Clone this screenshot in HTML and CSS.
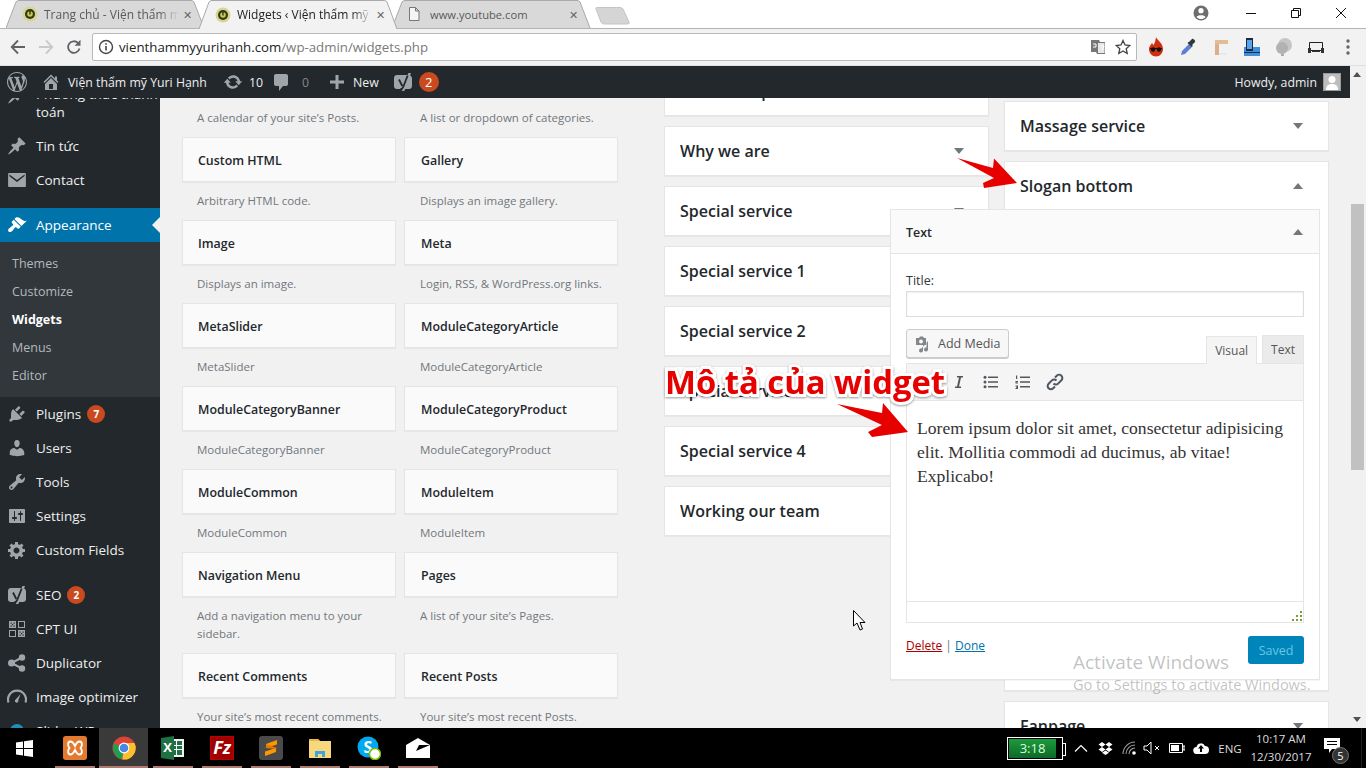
FILE: index.html
```html
<!DOCTYPE html>
<html lang="en">
<head>
    <meta charset="UTF-8">
    <meta name="viewport" content="width=device-width, initial-scale=1.0">
    <title>Widgets</title>
    <link rel="stylesheet" href="styles.css">
</head>
<body>

<svg class="sprite" width="0" height="0">
    <symbol id="i-pin" viewBox="0 0 20 20"><path d="M10.44 3.02l1.82-1.82 6.36 6.35-1.83 1.82c-1.05-.68-2.48-.57-3.41.36l-.75.75c-.92.93-1.04 2.35-.35 3.41l-1.83 1.82-2.41-2.41-2.8 2.79c-.42.42-3.38 2.71-3.8 2.29s1.86-3.39 2.28-3.81l2.79-2.79L4.1 9.36l1.83-1.82c1.05.69 2.48.57 3.4-.36l.75-.75c.93-.92 1.05-2.35.36-3.41z"/></symbol>
    <symbol id="i-mail" viewBox="0 0 20 20"><path d="M2 3h16c.6 0 .9.4.9 1v12c0 .6-.4 1-.9 1H2c-.6 0-.9-.4-.9-1V4c0-.6.4-1 .9-1zm15.6 3V4.6L10 10 2.4 4.6V6.200L10 12z"/></symbol>
    <symbol id="i-brush" viewBox="0 0 20 20"><path d="M14.48 11.06L7.41 3.99l1.5-1.5c.5-.56 2.3-.47 3.51.32 1.21.8 1.43 1.28 2.91 2.1 1.18.64 2.45 1.26 4.45.85zm-.71.71L6.7 4.7 4.93 6.47c-.39.39-.39 1.02 0 1.41l1.06 1.06c.39.39.39 1.03 0 1.42-.6.6-1.43 1.11-2.21 1.69-.35.26-.7.53-1.01.84C1.43 13.23.5 15.200 1.5 16.500c1 1.200 2.800.4 4-.8.300-.3.580-.660.840-1.010.580-.780 1.090-1.610 1.690-2.210.390-.390 1.030-.390 1.420 0l1.060 1.060c.390.390 1.020.390 1.410 0z"/></symbol>
    <symbol id="i-plug" viewBox="0 0 20 20"><path d="M13.11 4.360L9.870 7.600 8 5.730l3.240-3.240c.35-.34 1.050-.2 1.560.32.520.51.660 1.210.310 1.550zm-8 1.770l.91-1.120 9.010 9.010-1.190.840c-.71.710-2.630 1.160-3.820 1.160H6.140L4.900 17.260c-.59.590-1.540.590-2.120 0-.59-.58-.59-1.530 0-2.120l1.240-1.240v-3.880c0-1.130.400-3.190 1.090-3.890zm7.260 3.970l3.240-3.240c.34-.35 1.040-.21 1.550.31.520.51.660 1.210.310 1.550l-3.240 3.250z"/></symbol>
    <symbol id="i-user" viewBox="0 0 20 20"><path d="M10 9.250c-2.270 0-2.730-3.440-2.730-3.440C7 4.020 7.820 2 9.970 2c2.160 0 2.980 2.020 2.710 3.810 0 0-.41 3.440-2.68 3.440zm0 2.570L12.720 10c2.390 0 4.520 2.330 4.520 4.530v2.490s-3.650 1.130-7.240 1.130c-3.650 0-7.240-1.130-7.240-1.130v-2.490c0-2.250 1.940-4.480 4.470-4.480z"/></symbol>
    <symbol id="i-wrench" viewBox="0 0 20 20"><path d="M16.680 9.770c-1.340 1.340-3.300 1.670-4.950.99l-5.410 6.520c-.99.990-2.590.99-3.580 0s-.99-2.590 0-3.570l6.520-5.420c-.68-1.650-.35-3.610.99-4.950 1.280-1.280 3.120-1.620 4.720-1.060l-2.890 2.890 2.820 2.820 2.860-2.870c.530 1.580.180 3.390-1.080 4.650zM3.810 16.210c.4.390 1.040.39 1.430 0 .4-.4.4-1.040 0-1.430-.39-.4-1.030-.4-1.430 0-.39.39-.39 1.030 0 1.430z"/></symbol>
    <symbol id="i-sliders" viewBox="0 0 20 20"><path d="M18 16V4c0-.55-.45-1-1-1H3c-.55 0-1 .45-1 1v12c0 .55.45 1 1 1h14c.55 0 1-.45 1-1zM8 11h1c.55 0 1 .45 1 1s-.45 1-1 1H8v1.500c0 .28-.22.5-.5.5s-.5-.22-.5-.5V13H6c-.55 0-1-.45-1-1s.45-1 1-1h1V5.500c0-.28.22-.5.5-.5s.5.22.5.5V11zm5-2h-1c-.55 0-1-.45-1-1s.45-1 1-1h1V5.500c0-.28.22-.5.5-.5s.5.22.5.5V7h1c.55 0 1 .45 1 1s-.45 1-1 1h-1v5.500c0 .28-.22.5-.5.5s-.5-.22-.5-.5V9z"/></symbol>
    <symbol id="i-gear" viewBox="0 0 20 20"><path d="M18 12h-2.180c-.17.700-.44 1.350-.81 1.930l1.540 1.540-2.100 2.100-1.540-1.540c-.58.360-1.230.630-1.910.790V19H8v-2.180c-.68-.16-1.330-.43-1.910-.79l-1.540 1.540-2.120-2.120 1.540-1.540c-.36-.58-.63-1.230-.79-1.910H1V9.030h2.170c.16-.7.440-1.350.8-1.940L2.430 5.550l2.100-2.100 1.540 1.540c.58-.37 1.240-.64 1.930-.81V2h3v2.180c.68.160 1.330.430 1.910.790l1.540-1.540 2.120 2.120-1.540 1.540c.36.590.640 1.240.8 1.940H18V12zm-8.500 1.500c1.660 0 3-1.340 3-3s-1.340-3-3-3-3 1.340-3 3 1.340 3 3 3z"/></symbol>
    <symbol id="i-yoast" viewBox="0 0 20 20"><path d="M4 3h10.500l1-2h2.500l-.9 2.200C18.300 4 19 5 19 6.500V14c0 2-1.300 3-3 3h-3.800l-.9 2H8.700l.9-2H4c-2 0-3-1.300-3-3V6c0-2 1.300-3 3-3z"/><path d="M6 7.500l3.300 6.500M14.700 3.500L10 15.500c-.4 1-1.400 1.700-2.700 1.700" fill="none" stroke="#23282d" stroke-width="1.800"/></symbol>
    <symbol id="i-cpt" viewBox="0 0 20 20"><path d="M2 2h7v7H2zM2 11h7v7H2zM11 2h7v7h-7zM11 11h7v7h-7z"/><path d="M12 3h5v5h-5zM3 12h5v5H3z" fill="#23282d"/><path d="M3.500 3.500h1.200v1.200H3.500zM6.500 3.500h1.200v1.200H6.500zM5 5h1.200v1.200H5zM3.500 6.500h1.200v1.200H3.500zM6.500 6.500h1.200v1.200H6.500zM12.500 12.500h1.200v1.200h-1.200zM15.500 12.500h1.200v1.200h-1.200zM14 14h1.200v1.200H14zM12.500 15.500h1.200v1.200h-1.200zM15.500 15.500h1.200v1.200h-1.200z" fill="#23282d"/></symbol>
    <symbol id="i-share" viewBox="0 0 20 20"><circle cx="4.500" cy="10" r="3.500"/><circle cx="15" cy="4.500" r="3.200"/><circle cx="15" cy="15.500" r="3.200"/><path d="M4.500 10L15 4.500M4.500 10L15 15.500" fill="none" stroke="#a0a5aa" stroke-width="2"/></symbol>
    <symbol id="i-gauge" viewBox="0 0 20 20"><path d="M1.500 15.500a9 9 0 1 1 17 0" fill="none" stroke="#a0a5aa" stroke-width="2.200"/><path d="M13.600 7l-2.300 6.200a1.800 1.800 0 1 1-2.400-1z"/></symbol>
    <symbol id="i-wp" viewBox="0 0 20 20"><path d="M20 10c0-5.510-4.490-10-10-10C4.480 0 0 4.490 0 10c0 5.520 4.480 10 10 10 5.510 0 10-4.480 10-10zM7.780 15.370L4.370 6.220c.55-.02 1.170-.08 1.170-.08.5-.06.44-1.130-.06-1.110 0 0-1.450.11-2.370.11-.18 0-.37 0-.58-.01C4.120 2.690 6.870 1.110 10 1.110c2.330 0 4.450.870 6.050 2.340-.68-.11-1.650.390-1.650 1.580 0 .740.450 1.360.9 2.100.350.610.550 1.360.550 2.460 0 1.490-1.400 5-1.400 5l-3.030-8.370c.540-.02.820-.17.820-.17.5-.05.440-1.250-.06-1.220 0 0-1.440.120-2.380.120-.870 0-2.330-.12-2.330-.12-.5-.03-.56 1.200-.06 1.220l.920.080 1.260 3.410zM17.410 10c.240-.64.740-1.870.430-4.250.7 1.290 1.050 2.710 1.050 4.250 0 3.290-1.730 6.240-4.400 7.780.970-2.590 1.940-5.200 2.920-7.780zM6.100 18.090C3.120 16.650 1.110 13.530 1.110 10c0-1.300.230-2.480.72-3.590C3.250 10.300 4.670 14.200 6.100 18.090zm4.030-6.630l2.580 6.980c-.86.290-1.760.450-2.710.450-.79 0-1.570-.11-2.290-.33.810-2.380 1.620-4.740 2.420-7.100z"/></symbol>
    <symbol id="i-home" viewBox="0 0 20 20"><path d="M16 8.500l1.530 1.530-1.060 1.060L10 4.620l-6.470 6.470-1.060-1.060L10 2.500l4 4v-2h2v4zm-6-2.460l6 5.990V18H4v-5.970zM12 17v-5H8v5h4z"/></symbol>
    <symbol id="i-update" viewBox="0 0 20 20"><path d="M10.200 3.280c3.530 0 6.430 2.610 6.920 6h2.080l-3.500 4-3.500-4h2.320c-.45-1.970-2.210-3.450-4.320-3.450-1.450 0-2.730.710-3.540 1.780L4.950 5.660C6.230 4.200 8.110 3.280 10.200 3.280zm-.4 13.440c-3.520 0-6.430-2.610-6.920-6H.8l3.500-4c1.170 1.330 2.330 2.670 3.500 4H5.480c.450 1.970 2.210 3.450 4.320 3.450 1.450 0 2.730-.71 3.540-1.780l1.710 1.950c-1.280 1.460-3.150 2.380-5.250 2.380z"/></symbol>
    <symbol id="i-comment" viewBox="0 0 20 20"><path d="M5 2h10c1.100 0 2 .9 2 2v8c0 1.100-.9 2-2 2h-3l-4 5v-5H5c-1.100 0-2-.9-2-2V4c0-1.100.9-2 2-2z"/></symbol>
    <symbol id="i-plus" viewBox="0 0 20 20"><path d="M17 8.500v3h-5.500V17h-3v-5.500H3v-3h5.500V3h3v5.500z"/></symbol>
    <symbol id="i-fav" viewBox="0 0 16 16"><circle cx="8" cy="8" r="7.500" fill="#d8d68a"/><circle cx="8" cy="8" r="5" fill="#2f3a1c"/><circle cx="8" cy="8" r="2.800" fill="#c7c95a"/><path d="M7.300 5h1.400v3.500H7.300z" fill="#2f3a1c"/></symbol>
</svg>

<!-- browser tabs -->
<div class="tabstrip">
    <div class="tab">
        <svg class="tab-shape" width="199" height="28"><path d="M0 28L10 2Q11 .5 13 .5H185Q187 .5 188 2L198 28" fill="#d9d9d9" stroke="#a9a9a9"/></svg>
        <svg class="favicon" width="16" height="16"><use href="#i-fav"/></svg>
        <span class="tab-title">Trang chủ - Viện thẩm mỹ Yuri</span>
        <span class="tab-close">✕</span>
    </div>
    <div class="tab tab-active">
        <svg class="tab-shape" width="199" height="29"><path d="M0 29L10 2Q11 .5 13 .5H185Q187 .5 188 2L198 29" fill="#f2f2f2" stroke="#a9a9a9"/></svg>
        <svg class="favicon" width="16" height="16"><use href="#i-fav"/></svg>
        <span class="tab-title">Widgets ‹ Viện thẩm mỹ Yuri</span>
        <span class="tab-close">✕</span>
    </div>
    <div class="tab tab-page">
        <svg class="tab-shape" width="199" height="28"><path d="M0 28L10 2Q11 .5 13 .5H185Q187 .5 188 2L198 28" fill="#d9d9d9" stroke="#a9a9a9"/></svg>
        <svg class="favicon" width="16" height="16" viewBox="0 0 16 16"><path d="M3.500 1.500h6l3.500 3.500v9.500h-9.500zM9.500 1.500V5H13" fill="#f5f5f5" stroke="#777"/></svg>
        <span class="tab-title">www.youtube.com</span>
        <span class="tab-close">✕</span>
    </div>
    <svg class="newtab" width="36" height="20" viewBox="0 0 36 20"><path d="M2 1.500H25Q27 1.500 28 3L34 16Q35 18 32 18H9Q7 18 6 16L1 3Q.5 1.500 2 1.500z" fill="#d5d5d5" stroke="#c4c4c4"/></svg>
    <div class="winctl">
        <svg width="18" height="18" viewBox="0 0 18 18"><circle cx="9" cy="9" r="7.500" fill="#6e6e6e"/><circle cx="9" cy="6.700" r="2.600" fill="#fff"/><path d="M4.500 13c1-2.300 8-2.300 9 0-1.200 1.500-2.800 2-4.500 2s-3.300-.5-4.500-2z" fill="#fff"/></svg>
        <svg class="winbtn" width="12" height="12" viewBox="0 0 12 12"><path d="M1 6.500h10" stroke="#111"/></svg>
        <svg class="winbtn" width="12" height="12" viewBox="0 0 12 12"><path d="M1.500 3.500h7v7h-7zM3.500 3.500v-2h7v7h-2" fill="none" stroke="#111"/></svg>
        <svg class="winbtn" width="12" height="12" viewBox="0 0 12 12"><path d="M1 1l10 10M11 1L1 11" stroke="#111"/></svg>
    </div>
</div>

<!-- browser toolbar -->
<div class="toolbar">
    <svg class="navicon" width="16" height="16" viewBox="0 0 16 16"><path d="M15 8H2M8 1.500L1.700 8 8 14.500" fill="none" stroke="#5f6368" stroke-width="1.800"/></svg>
    <svg class="navicon" width="16" height="16" viewBox="0 0 16 16"><path d="M1 8h13M8 1.500L14.300 8 8 14.500" fill="none" stroke="#c9c9c9" stroke-width="1.800"/></svg>
    <svg class="navicon" width="16" height="16" viewBox="0 0 16 16"><path d="M13.500 9.500A5.800 5.800 0 1 1 12 4" fill="none" stroke="#5f6368" stroke-width="1.800"/><path d="M14.500.8v6h-6z" fill="#5f6368"/></svg>
    <div class="omnibox">
        <svg width="16" height="16" viewBox="0 0 16 16"><circle cx="8" cy="8" r="6.500" fill="none" stroke="#444" stroke-width="1.400"/><path d="M7.200 7h1.600v4.500H7.200zM7.200 4.200h1.600v1.600H7.200z" fill="#444"/></svg>
        <span class="url">vienthammyyurihanh.com<span class="url-path">/wp-admin/widgets.php</span></span>
        <svg class="omni-translate" width="16" height="16" viewBox="0 0 16 16"><path d="M1 1h8l1 2h5v12H7l-1-2H1z" fill="#777"/><path d="M8 4h6.500v10H8z" fill="#e8e8e8"/><path d="M3 5h3v3H3M11 7h3M12 11l2-4" fill="none" stroke="#fff"/></svg>
        <svg width="16" height="16" viewBox="0 0 16 16"><path d="M8 1.500l2 4.500 4.800.5-3.600 3.200 1 4.800L8 12l-4.200 2.500 1-4.800L1.200 6.500 6 6z" fill="#fff" stroke="#444" stroke-width="1.300"/></svg>
    </div>
    <div class="extensions">
        <svg width="18" height="20" viewBox="0 0 18 20"><path d="M9 0c1 3 7 6 7 12 0 4-3 7.500-7 7.500S2 16 2 12c0-3 2-4 3-6 1 1 1 2 1.500 2C8 6 8.500 3 9 0z" fill="#d0300f"/><circle cx="6" cy="12.500" r="2.200" fill="#111"/><circle cx="12" cy="12.500" r="2.200" fill="#111"/><path d="M3 11h12v1H3z" fill="#111"/></svg>
        <svg width="18" height="20" viewBox="0 0 18 20"><path d="M2 18l1-4 7-7 3 3-7 7z" fill="#5a7fd6"/><path d="M10 5l3-3c1-1 4 2 3 3l-3 3 1 1-1.500 1-4-4 1-1z" fill="#33373c"/></svg>
        <svg width="18" height="20" viewBox="0 0 18 20"><path d="M4 6h4v12H4z" fill="#d9b08a"/><path d="M4 3h13v4H4z" fill="#e3bb94"/><path d="M8 16h8v1.500H8z" fill="#e5e5e5"/></svg>
        <svg width="18" height="20" viewBox="0 0 18 20"><path d="M1 10h16v9H1z" fill="#3f8fe0"/><path d="M3 1h7v13H3z" fill="#1b2a3d"/><path d="M4 3h5v9H4z" fill="#5aa2ea"/><path d="M1 15h16v1H1z" fill="#1b2a3d"/></svg>
        <svg width="18" height="20" viewBox="0 0 18 20"><circle cx="10" cy="8" r="7" fill="#c6c6c6"/><circle cx="7" cy="11" r="6" fill="#b2b2b2"/><path d="M6 17h3v2H6z" fill="#aaa"/></svg>
        <svg width="18" height="20" viewBox="0 0 18 20"><path d="M2.500 5.500h13v8h-13z" fill="none" stroke="#222"/><path d="M1 11h3v5H1zM14 11h3v5h-3zM5 14h8v1H5z" fill="#333"/></svg>
        <svg class="dots" width="4" height="16" viewBox="0 0 4 16"><circle cx="2" cy="2" r="1.700" fill="#666"/><circle cx="2" cy="8" r="1.700" fill="#666"/><circle cx="2" cy="14" r="1.700" fill="#666"/></svg>
    </div>
</div>

<!-- wp admin bar -->
<div class="page">
    <div class="page-main">
        <div class="adminbar">
            <svg class="ab-wp" width="20" height="20"><use href="#i-wp"/></svg>
            <svg class="ab-home" width="20" height="20"><use href="#i-home"/></svg>
            <span class="ab-text">Viện thẩm mỹ Yuri Hạnh</span>
            <svg class="ab-update" width="20" height="20"><use href="#i-update"/></svg>
            <span class="ab-text">10</span>
            <svg class="ab-comment" width="20" height="20"><use href="#i-comment"/></svg>
            <span class="ab-text ab-dim">0</span>
            <svg class="ab-plus" width="20" height="20"><use href="#i-plus"/></svg>
            <span class="ab-text">New</span>
            <svg class="ab-yoast" width="20" height="20"><use href="#i-yoast"/></svg>
            <span class="ab-badge">2</span>
            <span class="ab-text ab-howdy">Howdy, admin</span>
            <span class="ab-avatar"><svg width="16" height="16" viewBox="0 0 16 16"><circle cx="8" cy="5.500" r="3.500" fill="#fff"/><path d="M2 16c0-4 2-6 6-6s6 2 6 6z" fill="#fff"/></svg></span>
        </div>

        <div class="wp-body">
            <!-- left menu -->
            <div class="sidebar">
                <div class="menu-item menu-two-line">
                    <svg width="20" height="20"><use href="#i-pin"/></svg>
                    <span>Phương thức thanh toán</span>
                </div>
                <div class="menu-item"><svg width="20" height="20"><use href="#i-pin"/></svg><span>Tin tức</span></div>
                <div class="menu-item"><svg width="20" height="20"><use href="#i-mail"/></svg><span>Contact</span></div>
                <div class="menu-sep"></div>
                <div class="menu-item menu-current"><svg width="20" height="20"><use href="#i-brush"/></svg><span>Appearance</span></div>
                <div class="submenu">
                    <div>Themes</div>
                    <div>Customize</div>
                    <div class="sub-current">Widgets</div>
                    <div>Menus</div>
                    <div>Editor</div>
                </div>
                <div class="menu-item"><svg width="20" height="20"><use href="#i-plug"/></svg><span>Plugins</span><b class="menu-badge">7</b></div>
                <div class="menu-item"><svg width="20" height="20"><use href="#i-user"/></svg><span>Users</span></div>
                <div class="menu-item"><svg width="20" height="20"><use href="#i-wrench"/></svg><span>Tools</span></div>
                <div class="menu-item"><svg width="20" height="20"><use href="#i-sliders"/></svg><span>Settings</span></div>
                <div class="menu-item"><svg width="20" height="20"><use href="#i-gear"/></svg><span>Custom Fields</span></div>
                <div class="menu-sep"></div>
                <div class="menu-item"><svg width="20" height="20"><use href="#i-yoast"/></svg><span>SEO</span><b class="menu-badge">2</b></div>
                <div class="menu-item"><svg width="20" height="20"><use href="#i-cpt"/></svg><span>CPT UI</span></div>
                <div class="menu-item"><svg width="20" height="20"><use href="#i-share"/></svg><span>Duplicator</span></div>
                <div class="menu-item"><svg width="20" height="20"><use href="#i-gauge"/></svg><span>Image optimizer</span></div>
                <div class="menu-item"><svg width="20" height="20" viewBox="0 0 20 20"><circle cx="10" cy="10" r="7" fill="#1f8fb5"/></svg><span>Slider WP</span></div>
            </div>

            <div class="content">
                <!-- available widgets -->
                <div class="available">
                    <div class="avail-cell avail-top"><p>A calendar of your site’s Posts.</p></div>
                    <div class="avail-cell avail-top"><p>A list or dropdown of categories.</p></div>
                    <div class="avail-cell"><div class="widget-title">Custom HTML</div><p>Arbitrary HTML code.</p></div>
                    <div class="avail-cell"><div class="widget-title">Gallery</div><p>Displays an image gallery.</p></div>
                    <div class="avail-cell"><div class="widget-title">Image</div><p>Displays an image.</p></div>
                    <div class="avail-cell"><div class="widget-title">Meta</div><p>Login, RSS, &amp; WordPress.org links.</p></div>
                    <div class="avail-cell"><div class="widget-title">MetaSlider</div><p>MetaSlider</p></div>
                    <div class="avail-cell"><div class="widget-title">ModuleCategoryArticle</div><p>ModuleCategoryArticle</p></div>
                    <div class="avail-cell"><div class="widget-title">ModuleCategoryBanner</div><p>ModuleCategoryBanner</p></div>
                    <div class="avail-cell"><div class="widget-title">ModuleCategoryProduct</div><p>ModuleCategoryProduct</p></div>
                    <div class="avail-cell"><div class="widget-title">ModuleCommon</div><p>ModuleCommon</p></div>
                    <div class="avail-cell"><div class="widget-title">ModuleItem</div><p>ModuleItem</p></div>
                    <div class="avail-cell"><div class="widget-title">Navigation Menu</div><p>Add a navigation menu to your sidebar.</p></div>
                    <div class="avail-cell"><div class="widget-title">Pages</div><p>A list of your site’s Pages.</p></div>
                    <div class="avail-cell"><div class="widget-title">Recent Comments</div><p>Your site’s most recent comments.</p></div>
                    <div class="avail-cell"><div class="widget-title">Recent Posts</div><p>Your site’s most recent Posts.</p></div>
                </div>

                <!-- middle sidebar column -->
                <div class="sidebar-col col-mid">
                    <div class="area"><h2>Product top</h2></div>
                    <div class="area"><h2>Why we are</h2><i class="caret"></i></div>
                    <div class="area"><h2>Special service</h2><i class="caret"></i></div>
                    <div class="area"><h2>Special service 1</h2><i class="caret"></i></div>
                    <div class="area"><h2>Special service 2</h2><i class="caret"></i></div>
                    <div class="area"><h2>Special service 3</h2><i class="caret"></i></div>
                    <div class="area"><h2>Special service 4</h2><i class="caret"></i></div>
                    <div class="area"><h2>Working our team</h2><i class="caret"></i></div>
                </div>

                <!-- right sidebar column -->
                <div class="sidebar-col col-right">
                    <div class="area"><h2>Massage service</h2><i class="caret"></i></div>
                    <div class="area area-open">
                        <h2>Slogan bottom</h2><i class="caret caret-up"></i>
                        <div class="widget-pop">
                            <div class="pop-head"><span>Text</span><i class="caret caret-up"></i></div>
                            <div class="pop-body">
                                <label class="pop-label">Title:</label>
                                <div class="pop-input"></div>
                                <div class="editor-tools">
                                    <div class="add-media">
                                        <svg width="18" height="18" viewBox="0 0 18 18"><path d="M2 3h3l1-1.500h3L10 3h2v7H2z" fill="#82878c"/><circle cx="7" cy="6.500" r="2" fill="#f7f7f7"/><path d="M14 6v8.500a2 2 0 1 1-1.500-1.900V8L9 9v6.500a2 2 0 1 1-1.500-1.900" fill="#82878c"/></svg>
                                        <span>Add Media</span>
                                    </div>
                                    <div class="editor-tabs">
                                        <span class="etab etab-on">Visual</span>
                                        <span class="etab">Text</span>
                                    </div>
                                </div>
                                <div class="editor">
                                    <div class="mce-bar">
                                        <svg width="20" height="20" viewBox="0 0 20 20"><path d="M8 4h6v1.500h-2L10 14.500h2V16H6v-1.500h2L10 5.500H8z" fill="#50575e"/></svg>
                                        <svg width="20" height="20" viewBox="0 0 20 20"><path d="M7 4.500h10v1.400H7zM7 9.300h10v1.400H7zM7 14.100h10v1.400H7z" fill="#50575e"/><circle cx="4" cy="5.200" r="1.500" fill="#50575e"/><circle cx="4" cy="10" r="1.500" fill="#50575e"/><circle cx="4" cy="14.800" r="1.500" fill="#50575e"/></svg>
                                        <svg width="20" height="20" viewBox="0 0 20 20"><path d="M7 4.500h10v1.400H7zM7 9.300h10v1.400H7zM7 14.100h10v1.400H7z" fill="#50575e"/><path d="M3 3.500h1.200v3.500H3zM2.500 9h2.500v1H3.600v.6H5v1H2.500zM2.500 13.500H5v3.500H2.500v-1h1.500v-.3H3v-.9h1v-.3H2.500z" fill="#50575e"/></svg>
                                        <svg width="20" height="20" viewBox="0 0 20 20"><path d="M8.500 11.500a3.200 3.200 0 0 0 4.600.1l3.300-3.300a3.200 3.200 0 0 0-4.600-4.600L10 5.500M11.500 8.500a3.200 3.200 0 0 0-4.600-.1l-3.300 3.300a3.200 3.200 0 0 0 4.600 4.600L10 14.500" fill="none" stroke="#50575e" stroke-width="2"/></svg>
                                    </div>
                                    <div class="mce-text">Lorem ipsum dolor sit amet, consectetur adipisicing elit. Mollitia commodi ad ducimus, ab vitae! Explicabo!</div>
                                    <div class="mce-status"><svg width="10" height="10" viewBox="0 0 10 10"><path d="M8 0h2v2H8zM8 4h2v2H8zM8 8h2v2H8zM4 4h2v2H4zM4 8h2v2H4zM0 8h2v2H0z" fill="#7d9a3c"/></svg></div>
                                </div>
                                <div class="pop-foot">
                                    <div class="pop-links"><a class="link-del">Delete</a> | <a class="link-done">Done</a></div>
                                    <span class="btn-saved">Saved</span>
                                </div>
                            </div>
                        </div>
                    </div>
                    <div class="area"><h2>Fanpage</h2><i class="caret"></i></div>
                </div>
            </div>
        </div>
    </div>
    <!-- page scrollbar -->
    <div class="scrollbar">
        <i class="sb-up"></i>
        <div class="sb-thumb"></div>
        <i class="sb-down"></i>
    </div>
</div>

<!-- windows taskbar -->
<div class="taskbar">
    <div class="start"><svg width="17" height="17" viewBox="0 0 17 17"><path d="M0 2.500l7-1v6.500H0zM8 1.300L17 0v8H8zM0 9h7v6.500l-7-1zM8 9h9v8l-9-1.300z" fill="#fff"/></svg></div>
    <div class="task"><svg width="24" height="24" viewBox="0 0 26 26"><rect width="26" height="26" rx="3" fill="#e27a2f"/><path d="M8 6c3 0 4 3 5 5 1-2 2-5 5-5 2 0 2.500 2 2.500 3.500S19 13 19 13s1.500 2 1.500 3.500S20 20 18 20c-3 0-4-3-5-5-1 2-2 5-5 5-2 0-2.500-2-2.500-3.500S7 13 7 13 5.500 11 5.500 9.500 6 6 8 6z" fill="none" stroke="#fff" stroke-width="2"/></svg></div>
    <div class="task task-on"><svg width="24" height="24" viewBox="0 0 24 24"><circle cx="12" cy="12" r="11.500" fill="#db4437"/><path d="M12 12L2 7.500A11.500 11.500 0 0 0 10 23.300z" fill="#1e9e52"/><path d="M12 12l-1.700 11.400A11.500 11.500 0 0 0 22.500 7H12z" fill="#fbc02d"/><circle cx="12" cy="12" r="5.400" fill="#fff"/><circle cx="12" cy="12" r="4.300" fill="#4a86e8"/></svg></div>
    <div class="task"><svg width="24" height="24" viewBox="0 0 24 24"><path d="M9 3h14v18H9z" fill="#fff" opacity=".95"/><path d="M11 5h10v14H11z" fill="#1e7145"/><path d="M15 5h1v14h-1zM11 9h10v1H11zM11 13h10v1H11z" fill="#fff"/><path d="M0 2l13-2v24L0 22z" fill="#1e7145"/><text x="6.500" y="16" class="tb-x">X</text></svg></div>
    <div class="task"><svg width="24" height="24" viewBox="0 0 24 24"><rect width="24" height="24" fill="#bf0000"/><rect x="1" y="1" width="22" height="22" fill="#a00000"/><text x="12" y="18" class="tb-fz">Fz</text></svg></div>
    <div class="task"><svg width="24" height="24" viewBox="0 0 24 24"><rect width="24" height="24" rx="3" fill="#4a4a4a"/><path d="M18 4v4.500L7 12V8zM6 20v-4.500L17 12v4z" fill="#ff9800"/><path d="M7 8l11 4-1 1L7 12z" fill="#e07b00"/></svg></div>
    <div class="task"><svg width="24" height="24" viewBox="0 0 24 24"><path d="M1 3h9l2 2h11v17H1z" fill="#f9d77e"/><path d="M1 3h9l2 2H1z" fill="#e6b84a"/><path d="M7 21v-6h10v6h-3v-3h-4v3z" fill="#3aa5e0"/></svg></div>
    <div class="task"><svg width="24" height="24" viewBox="0 0 24 24"><circle cx="11" cy="11" r="10.500" fill="#00a9f0"/><text x="11" y="16.500" class="tb-s">S</text><circle cx="18" cy="18" r="5.500" fill="#fff" stroke="#7fba00" stroke-width="1.500"/></svg></div>
    <div class="task"><svg width="24" height="20" viewBox="0 0 24 20"><path d="M0 7L12 0l12 7v13H0z" fill="#fff"/><path d="M0 7h24L10 13l3-6z" fill="#000"/></svg></div>

    <div class="tray">
        <div class="battery-box">
            <div class="battery-fill">3:18</div>
        </div>
        <div class="tray-icon"><svg width="14" height="8" viewBox="0 0 14 8"><path d="M1 7.500l6-6 6 6" fill="none" stroke="#fff" stroke-width="1.200"/></svg></div>
        <div class="tray-icon"><svg width="15" height="13" viewBox="0 0 15 13"><path d="M4 0l3.500 2.500L4 5 .5 2.500zM11 0l3.500 2.500L11 5 7.500 2.500zM4 5l3.500 2.500L4 10 .5 7.500zM11 5l3.500 2.500L11 10 7.500 7.500zM4 10.800l3.500-2.300 3.500 2.300L7.500 13z" fill="#fff"/></svg></div>
        <div class="tray-icon"><svg width="14" height="14" viewBox="0 0 14 14"><path d="M1 13A12 12 0 0 1 13 1M4 13a9 9 0 0 1 9-9M7 13a6 6 0 0 1 6-6" fill="none" stroke="#999" stroke-width="1.100"/><circle cx="12" cy="12" r="1.800" fill="#fff"/></svg></div>
        <div class="tray-icon"><svg width="20" height="14" viewBox="0 0 20 14"><path d="M1 5h3l4-4v12L4 9H1z" fill="none" stroke="#fff"/><path d="M12 5l4 4M16 5l-4 4" stroke="#fff"/></svg></div>
        <div class="tray-icon"><svg width="16" height="10" viewBox="0 0 16 10"><path d="M.5.500h13v9H.5zM14 3h2v4h-2z" fill="none" stroke="#fff"/><path d="M2 2h8v6H2z" fill="#fff"/></svg></div>
        <div class="tray-icon"><svg width="16" height="12" viewBox="0 0 16 12"><path d="M4 12a3.500 3.500 0 0 1-.5-7 4.500 4.500 0 0 1 8.500-1 4 4 0 0 1 0 8z" fill="#fff"/><path d="M8 3l3 3.500H9V10H7V6.500H5z" fill="#000"/></svg></div>
        <div class="tray-lang">ENG</div>
        <div class="tray-clock"><div>10:17 AM</div><div>12/30/2017</div></div>
        <div class="tray-notif">
            <svg width="16" height="15" viewBox="0 0 16 15"><path d="M0 0h16v11H8l-3 4v-4H0z" fill="#fff"/><path d="M3 3h10v1H3zM3 6h10v1H3z" fill="#000"/></svg>
            <span class="notif-count">5</span>
        </div>
    </div>
</div>

<!-- annotations drawn over the screenshot -->
<div class="annot-text">Mô tả của widget</div>
<svg class="annot-arrows" width="1366" height="768">
    <g fill="#e60000">
        <path d="M957 158L993 168L994 158.500L1017 183L984 188L983 183L994 178z"/>
        <path d="M837 404L882 413L883 403L908 432L872 437L868 432L882 425z"/>
    </g>
    <path d="M853.500 610.500V626L857 623L860 630L862.500 629L860 622.500H865z" fill="#fff" stroke="#000"/>
</svg>
<div class="activate">
    <div class="activate-big">Activate Windows</div>
    <div class="activate-small">Go to Settings to activate Windows.</div>
</div>

</body>
</html>
```

FILE: styles.css
```css
* {
    box-sizing: border-box;
}

html, body {
    height: 100%;
}

body {
    margin: 0;
    width: 1366px;
    height: 768px;
    overflow: hidden;
    position: relative;
    display: flex;
    flex-direction: column;
    font-family: "Open Sans", "Noto Sans", sans-serif;
    font-size: 13px;
    background: #f1f1f1;
}

.sprite {
    position: absolute;
}

/* browser tabs */
.tabstrip {
    height: 28px;
    background: #fff;
    display: flex;
    padding-left: 6px;
    position: relative;
    z-index: 2;
    flex: none;
}

.tab {
    position: relative;
    width: 199px;
    margin-right: -6px;
    height: 28px;
    display: flex;
    align-items: center;
    padding: 0 10px 0 16px;
    font-size: 12px;
    color: #5a5a5a;
}

.tab-active {
    color: #222;
    z-index: 1;
    height: 29px;
}

.tab-shape {
    position: absolute;
    left: 0;
    top: 0;
}

.favicon {
    position: relative;
    flex: none;
    margin-right: 6px;
}

.tab-page {
    font-size: 11.200px;
}

.tab-page .favicon {
    margin-left: -2px;
    margin-right: 8px;
}

.tab-title {
    position: relative;
    flex: 1;
    white-space: nowrap;
    overflow: hidden;
    -webkit-mask-image: linear-gradient(to right, #000 85%, transparent);
    mask-image: linear-gradient(to right, #000 85%, transparent);
}

.tab-page .tab-title {
    -webkit-mask-image: none;
    mask-image: none;
}

.tab-close {
    position: relative;
    flex: none;
    width: 12px;
    margin-left: 4px;
    font-size: 11px;
    color: #666;
}

.newtab {
    margin: 6px 0 0 10px;
}

.winctl {
    margin-left: auto;
    display: flex;
    align-items: center;
    height: 26px;
}

.winctl svg:first-child {
    margin-right: 35px;
}

.winbtn {
    margin-right: 33px;
}

.winbtn:last-child {
    margin-right: 19px;
}

/* browser toolbar */
.toolbar {
    height: 38px;
    background: #f2f2f2;
    border-top: 1px solid #b4b4b4;
    border-bottom: 1px solid #e0e0e0;
    display: flex;
    align-items: center;
    padding: 0 10px;
    flex: none;
}

.navicon {
    margin-right: 12px;
}

.navicon:nth-child(3) {
    margin-right: 10px;
}

.omnibox {
    width: 1045px;
    height: 28px;
    background: #fff;
    border: 1px solid #b9b9b9;
    border-radius: 2px;
    display: flex;
    align-items: center;
    padding: 0 5px;
}

.url {
    margin-left: 5px;
    font-size: 13.250px;
    color: #222;
    flex: 1;
}

.url-path {
    color: #7a7a7a;
}

.omni-translate {
    margin-right: 9px;
}

.extensions {
    display: flex;
    align-items: center;
    gap: 14px;
    margin-left: 10px;
}

.dots {
    margin-left: 7px;
}

/* page below the toolbar */
.page {
    flex: 1;
    min-height: 0;
    display: flex;
}

.page-main {
    width: 1350px;
    display: flex;
    flex-direction: column;
    min-height: 0;
}

.adminbar {
    height: 32px;
    background: #23282d;
    display: flex;
    align-items: center;
    color: #eee;
    padding-left: 7px;
    flex: none;
}

.adminbar svg {
    fill: #a0a5aa;
    flex: none;
}

.ab-text {
    font-size: 12.300px;
}

.ab-dim {
    color: #82878c;
}

.ab-home {
    margin: 0 7px 0 14px;
}

.ab-update {
    margin: 0 6px 0 16px;
}

.ab-comment {
    margin: 0 11px 0 8px;
}

.ab-plus {
    margin: 0 6px 0 18px;
}

.ab-yoast {
    margin: 0 6px 0 14px;
}

.ab-badge {
    width: 20px;
    height: 20px;
    border-radius: 50%;
    background: #ca4a1f;
    color: #fff;
    font-size: 13px;
    text-align: center;
    line-height: 20px;
}

.ab-howdy {
    margin-left: auto;
    margin-right: 6px;
}

.ab-avatar {
    width: 18px;
    height: 18px;
    margin-right: 9px;
    background: #bdbdbd;
    border: 1px solid #999;
    display: flex;
    align-items: flex-end;
    justify-content: center;
}

.wp-body {
    flex: 1;
    min-height: 0;
    display: flex;
    overflow: hidden;
}

/* left menu */
.sidebar {
    width: 160px;
    flex: none;
    background: #23282d;
    color: #eee;
    overflow: hidden;
}

.menu-item {
    height: 34px;
    display: flex;
    align-items: center;
    position: relative;
    padding-left: 7px;
    font-size: 13.500px;
}

.menu-item svg {
    flex: none;
    fill: #a0a5aa;
    margin-right: 9px;
}

.menu-two-line {
    height: 52px;
    margin-top: -21px;
    line-height: 18px;
    align-items: flex-start;
    padding-top: 8px;
}

.menu-sep {
    height: 11px;
}

.menu-current {
    background: #0073aa;
    color: #fff;
}

.menu-current svg {
    fill: #fff;
}

.menu-current::after {
    content: "";
    position: absolute;
    right: 0;
    top: 9px;
    border: 8px solid transparent;
    border-right-color: #f1f1f1;
    border-left-width: 0;
}

.submenu {
    background: #32373c;
    color: #b4b9be;
    font-size: 12.500px;
    padding: 8px 0 7px 12px;
}

.submenu div {
    height: 28px;
    line-height: 28px;
}

.sub-current {
    color: #fff;
    font-weight: 700;
}

.menu-badge {
    width: 18px;
    height: 18px;
    border-radius: 50%;
    background: #ca4a1f;
    color: #fff;
    font-size: 10px;
    line-height: 18px;
    text-align: center;
    margin-left: 6px;
}

/* widgets area */
.content {
    flex: 1;
    min-width: 0;
    display: flex;
    align-items: flex-start;
    padding-left: 22px;
}

.available {
    width: 436px;
    flex: none;
    display: grid;
    grid-template-columns: 214px 214px;
    column-gap: 8px;
}

.avail-cell p {
    margin: 0;
    padding: 10px 10px 10px 15px;
    font-size: 11.500px;
    line-height: 18px;
    color: #72777c;
}

.avail-cell:nth-child(even) p {
    padding-left: 16px;
}

.avail-top {
    padding-top: 1px;
}

.widget-title {
    height: 45px;
    background: #fafafa;
    border: 1px solid #e5e5e5;
    box-shadow: 0 1px 1px rgba(0, 0, 0, 0.04);
    padding-left: 15px;
    line-height: 45px;
    font-weight: 600;
    font-size: 12.400px;
    color: #23282d;
}

.avail-cell:nth-child(even) .widget-title {
    padding-left: 16px;
}

.sidebar-col {
    width: 325px;
    flex: none;
}

.col-mid {
    margin-left: 46px;
    margin-top: -32px;
}

.col-mid .caret {
    right: 24px;
}

.col-right {
    margin-left: 15px;
    padding-top: 3px;
}

.area {
    position: relative;
    height: 50px;
    margin-bottom: 10px;
    background: #fff;
    border: 1px solid #e5e5e5;
    box-shadow: 0 1px 1px rgba(0, 0, 0, 0.04);
    padding: 0 15px;
}

.area h2 {
    margin: 0;
    line-height: 48px;
    font-size: 16px;
    font-weight: 600;
    color: #23282d;
}

.caret {
    position: absolute;
    right: 25px;
    top: 21px;
    border: 5px solid transparent;
    border-top: 6px solid #72777c;
    border-bottom-width: 0;
}

.caret-up {
    border-top-width: 0;
    border-bottom: 6px solid #72777c;
}

.area-open {
    height: 530px;
}

/* opened widget */
.widget-pop {
    position: absolute;
    left: -115px;
    top: 47px;
    width: 430px;
    height: 471px;
    background: #fff;
    border: 1px solid #e5e5e5;
    box-shadow: 0 1px 1px rgba(0, 0, 0, 0.04);
}

.pop-head {
    position: relative;
    height: 44px;
    background: #fafafa;
    border-bottom: 1px solid #e5e5e5;
    padding-left: 15px;
    line-height: 45px;
    font-weight: 600;
    font-size: 12.400px;
    color: #23282d;
}

.pop-head .caret {
    right: 16px;
    top: 19px;
}

.pop-body {
    padding: 18px 15px 0;
}

.pop-label {
    display: block;
    font-size: 12.500px;
    line-height: 18px;
    color: #32373c;
}

.pop-input {
    height: 26px;
    margin-top: 1px;
    border: 1px solid #ddd;
    box-shadow: inset 0 1px 2px rgba(0, 0, 0, 0.07);
}

.editor-tools {
    display: flex;
    justify-content: space-between;
    align-items: flex-end;
    margin-top: 12px;
    height: 34px;
}

.add-media {
    height: 29px;
    width: 103px;
    align-self: flex-start;
    display: flex;
    align-items: center;
    gap: 6px;
    padding-left: 7px;
    background: #f7f7f7;
    border: 1px solid #ccc;
    border-radius: 3px;
    box-shadow: 0 1px 0 #ccc;
    color: #555;
    font-size: 12.500px;
}

.editor-tabs {
    display: flex;
    gap: 5px;
}

.etab {
    height: 28px;
    line-height: 28px;
    padding: 0 8px;
    background: #ebebeb;
    border: 1px solid #e5e5e5;
    border-bottom: 0;
    font-size: 12px;
    color: #555;
}

.etab-on {
    background: #f5f5f5;
    position: relative;
    top: 1px;
}

.editor {
    border: 1px solid #e5e5e5;
}

.mce-bar {
    height: 37px;
    background: #f5f5f5;
    border-bottom: 1px solid #e5e5e5;
    display: flex;
    align-items: center;
    justify-content: flex-start;
    gap: 12px;
    padding-left: 42px;
}

.mce-text {
    height: 200px;
    padding: 15px 10px;
    font-family: "Liberation Serif", serif;
    font-size: 17.600px;
    line-height: 24px;
    color: #333;
}

.mce-status {
    height: 21px;
    border-top: 1px solid #e5e5e5;
    display: flex;
    justify-content: flex-end;
    align-items: flex-end;
    padding: 0 1px 1px 0;
}

.pop-foot {
    display: flex;
    justify-content: space-between;
    align-items: flex-start;
    margin-top: 13px;
}

.pop-links {
    padding-top: 1px;
    font-size: 12px;
    color: #72777c;
}

.link-del {
    color: #a00;
    text-decoration: underline;
}

.link-done {
    color: #0073aa;
    text-decoration: underline;
}

.btn-saved {
    width: 56px;
    height: 28px;
    line-height: 29px;
    text-align: center;
    background: #0085ba;
    border-radius: 3px;
    color: #66c6e4;
    font-size: 12.500px;
}

/* scrollbar */
.scrollbar {
    width: 16px;
    flex: none;
    background: #f1f1f1;
    position: relative;
}

.sb-thumb {
    position: absolute;
    left: 1px;
    top: 138px;
    width: 13px;
    height: 266px;
    background: #c1c1c1;
}

.sb-up, .sb-down {
    position: absolute;
    left: 3px;
    border: 4px solid transparent;
}

.sb-up {
    top: 6px;
    border-bottom: 5px solid #505050;
    border-top-width: 0;
}

.sb-down {
    bottom: 6px;
    border-top: 5px solid #505050;
    border-bottom-width: 0;
}

/* windows taskbar */
.taskbar {
    height: 40px;
    flex: none;
    background: #000;
    display: flex;
    color: #fff;
}

.start {
    width: 50px;
    display: flex;
    align-items: center;
    justify-content: flex-start;
    padding-left: 16px;
}

.task {
    width: 49px;
    height: 40px;
    display: flex;
    align-items: center;
    justify-content: center;
    position: relative;
}

.task::after {
    content: "";
    position: absolute;
    left: 5px;
    right: 4px;
    bottom: 0;
    height: 2px;
    background: #b07a6e;
}

.task-on {
    background: #3a3a3a;
}

.task-on::after {
    left: 0;
    right: 0;
}

.tb-x {
    font-size: 13px;
    font-weight: 700;
    fill: #fff;
    text-anchor: middle;
}

.tb-fz {
    font-size: 18px;
    font-style: italic;
    font-weight: 700;
    fill: #fff;
    text-anchor: middle;
}

.tb-s {
    font-size: 16px;
    font-weight: 700;
    fill: #fff;
    text-anchor: middle;
}

.tray {
    margin-left: auto;
    display: flex;
    align-items: center;
    padding-right: 17px;
    position: relative;
}

.tray::after {
    content: "";
    position: absolute;
    right: 4px;
    top: 0;
    bottom: 0;
    width: 1px;
    background: #222;
}

.battery-box {
    width: 56px;
    height: 23px;
    margin-right: 6px;
    border: 1px solid #fff;
    padding: 1px;
    position: relative;
}

.battery-box::after {
    content: "";
    position: absolute;
    right: -4px;
    top: 5px;
    width: 3px;
    height: 11px;
    border: 1px solid #fff;
    border-left: 0;
}

.battery-fill {
    width: 47px;
    height: 100%;
    background: linear-gradient(#1c9a3c, #0d6a28);
    text-align: center;
    line-height: 19px;
    font-size: 13px;
    color: #d8ffd8;
}

.tray-icon {
    width: 24px;
    display: flex;
    justify-content: center;
}

.tray-lang {
    width: 34px;
    text-align: center;
    font-size: 11.500px;
    color: #ddd;
}

.tray-clock {
    width: 68px;
    text-align: center;
    font-size: 11.500px;
    line-height: 18px;
    color: #ddd;
}

.tray-notif {
    width: 34px;
    height: 40px;
    position: relative;
    display: flex;
    align-items: center;
    justify-content: center;
}

.tray-notif svg {
    position: relative;
    top: -3px;
}

.notif-count {
    position: absolute;
    right: 0;
    bottom: 4px;
    width: 17px;
    height: 17px;
    border-radius: 50%;
    background: #333;
    border: 1px solid #777;
    font-size: 11px;
    line-height: 15px;
    text-align: center;
}

/* annotations on top of the page */
.annot-text {
    position: absolute;
    left: 665px;
    top: 360px;
    font-size: 32.800px;
    line-height: 44px;
    font-weight: 700;
    color: #e60000;
    white-space: nowrap;
    -webkit-text-stroke: 6px #fff;
    paint-order: stroke fill;
    filter: drop-shadow(0 1px 1px rgba(0, 0, 0, 0.4));
    z-index: 5;
}

.annot-arrows {
    position: absolute;
    left: 0;
    top: 0;
    pointer-events: none;
    z-index: 6;
}

.activate {
    position: absolute;
    left: 1073px;
    top: 650px;
    color: rgba(120, 120, 120, 0.45);
    z-index: 7;
}

.activate-big {
    font-size: 19px;
    line-height: 24px;
}

.activate-small {
    font-size: 14.500px;
    line-height: 22px;
}
```
